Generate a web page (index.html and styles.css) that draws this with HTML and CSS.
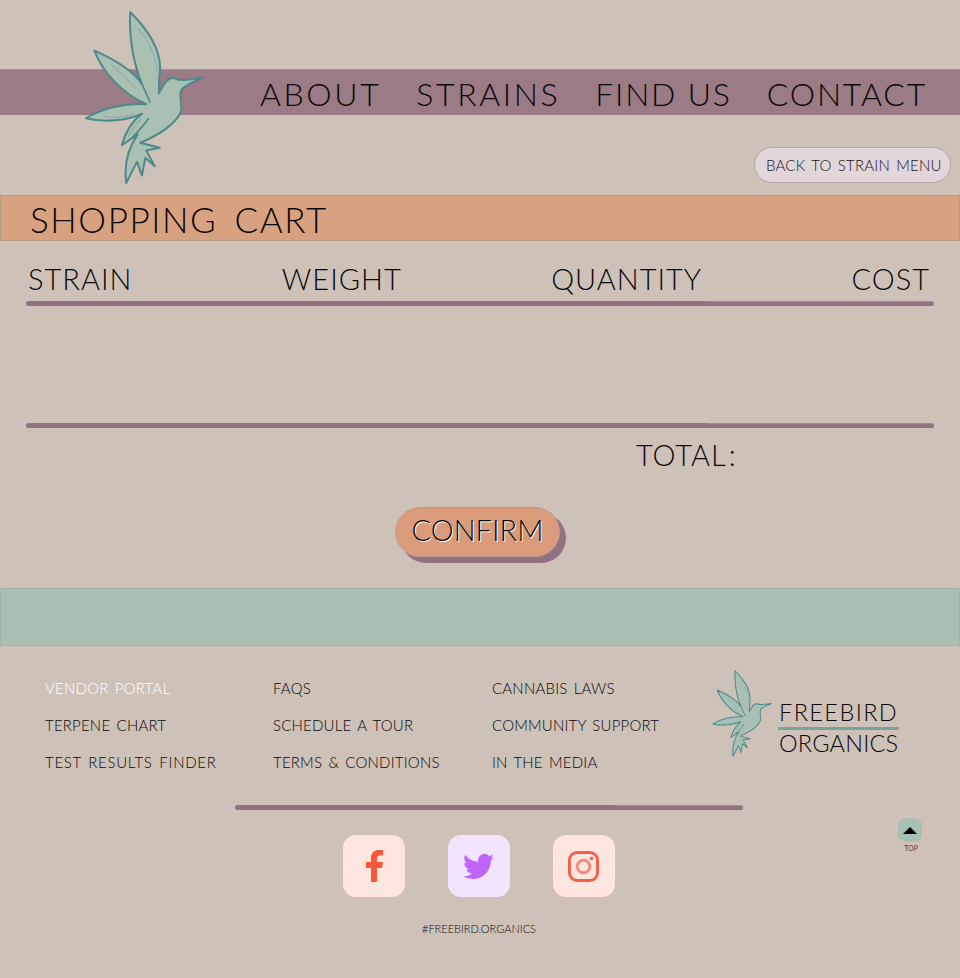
FILE: index.html
```html
<!DOCTYPE html>
<html lang="en">
<head>
<meta charset="utf-8">
<title>Shopping Cart - Freebird Organics</title>
<link rel="stylesheet" href="styles.css">
</head>
<body>
<svg class="defs" width="0" height="0" aria-hidden="true">
  <symbol id="bird" viewBox="72 32 358 516">
    <path class="bird-body" d="M210 35C260 85 310 150 297 225L295 278C310 250 320 230 340 232C355 240 375 240 425 230C400 245 375 250 362 268C355 285 365 310 362 330C350 365 300 400 240 425L298 440L258 448L283 495L255 470L245 523L230 482L198 545C190 490 205 440 232 400L185 432C195 395 215 360 245 338C200 360 130 365 78 352C120 325 190 305 258 310C190 280 130 220 103 150C160 175 215 205 245 250C220 190 205 110 210 35Z"/>
    <path class="bird-line" d="M245 250L270 305M265 352C250 375 235 390 215 410"/>
    <path class="bird-vein" d="M235 85C265 125 290 170 290 215M150 190C180 215 205 240 225 262M130 346C160 352 190 348 220 340M205 405C215 385 230 365 245 352"/>
  </symbol>
</svg>

<header class="site-header">
  <svg class="logo-main" aria-hidden="true"><use href="#bird"/></svg>
  <nav class="nav-band">
    <a class="nav-link">ABOUT</a>
    <a class="nav-link">STRAINS</a>
    <a class="nav-link nav-link-tight">FIND US</a>
    <a class="nav-link nav-link-tight">CONTACT</a>
  </nav>
  <div class="back-row"><a class="back-btn">BACK TO STRAIN MENU</a></div>
</header>

<main>
  <h1 class="title-band">SHOPPING CART</h1>
  <section class="cart">
    <div class="cart-head">
      <span>STRAIN</span><span>WEIGHT</span><span>QUANTITY</span><span>COST</span>
    </div>
    <div class="rule cart-rule"><i class="seg-a"></i><i class="seg-b"></i><i class="seg-c"></i></div>
    <div class="cart-body"></div>
    <div class="rule cart-rule"><i class="seg-a"></i><i class="seg-b"></i><i class="seg-c"></i></div>
    <div class="total">TOTAL :</div>
    <div class="confirm-row"><button class="confirm">CONFIRM</button></div>
  </section>
  <div class="green-band"></div>
</main>

<footer class="site-footer">
  <div class="footer-top">
    <ul class="link-col col-1">
      <li class="link-light">VENDOR PORTAL</li>
      <li>TERPENE CHART</li>
      <li class="link-wide">TEST RESULTS FINDER</li>
    </ul>
    <ul class="link-col col-2">
      <li>FAQS</li>
      <li>SCHEDULE A TOUR</li>
      <li>TERMS &amp; CONDITIONS</li>
    </ul>
    <ul class="link-col col-3">
      <li>CANNABIS LAWS</li>
      <li>COMMUNITY SUPPORT</li>
      <li>IN THE MEDIA</li>
    </ul>
    <div class="brand">
      <svg class="logo-small" aria-hidden="true"><use href="#bird"/></svg>
      <div class="wordmark"><span class="word">FREEBIRD</span><span class="word word-bottom">ORGANICS</span></div>
    </div>
  </div>
  <div class="rule footer-rule"><i class="seg-d"></i><i class="seg-e"></i><i class="seg-f"></i></div>
  <a class="top-link">
    <span class="top-btn"><svg width="14" height="7" viewBox="0 0 14 7"><path d="M7 0L14 7H0Z"/></svg></span>
    <span class="top-label">TOP</span>
  </a>
  <div class="socials">
    <a class="social social-pink"><svg class="fb" viewBox="0 0 17 32"><path d="M5 32V18H0V12H5V8C5 3 8 0 13 0H17V5.5H14C11.5 5.5 11 7 11 8.5V12H17L16 18H11V32Z"/></svg></a>
    <a class="social social-purple"><svg class="tw" viewBox="0 0 24 24"><path d="M23.953 4.57a10 10 0 01-2.825.775 4.958 4.958 0 002.163-2.723c-.951.555-2.005.959-3.127 1.184a4.92 4.92 0 00-8.384 4.482C7.69 8.095 4.067 6.13 1.64 3.162a4.822 4.822 0 00-.666 2.475c0 1.71.87 3.213 2.188 4.096a4.904 4.904 0 01-2.228-.616v.06a4.923 4.923 0 003.946 4.827 4.996 4.996 0 01-2.212.085 4.936 4.936 0 004.604 3.417 9.867 9.867 0 01-6.102 2.105c-.39 0-.779-.023-1.17-.067a13.995 13.995 0 007.557 2.209c9.053 0 13.998-7.496 13.998-13.985 0-.21 0-.42-.015-.63A9.935 9.935 0 0024 4.59z"/></svg></a>
    <a class="social social-pink"><svg class="ig" viewBox="0 0 32 32"><rect class="ig-frame" x="1.5" y="1.5" width="29" height="29" rx="8"/><circle class="ig-lens" cx="16" cy="16" r="6.5"/><circle class="ig-dot" cx="24.3" cy="7.7" r="1.8"/></svg></a>
  </div>
  <div class="hashtag">#FREEBIRD.ORGANICS</div>
</footer>
</body>
</html>
```
FILE: styles.css
```css
* { box-sizing: border-box; }
html, body { margin: 0; padding: 0; }
body {
  position: relative;
  width: 960px;
  height: 978px;
  overflow: hidden;
  background: #cec1b8;
  color: #0a0808;
  font-family: Lato, "Liberation Sans", sans-serif;
  font-weight: 300;
}
.defs { position: absolute; }
.bird-body { fill: #a9c0b2; stroke: #4d8a8a; stroke-width: 6; stroke-linejoin: round; }
.bird-line { fill: none; stroke: #4d8a8a; stroke-width: 5; }
.bird-vein { fill: none; stroke: #8aaca4; stroke-width: 3; }

.site-header { height: 195px; padding-top: 69px; }
.logo-main { position: absolute; left: 84px; top: 11px; width: 120px; height: 173px; }
.nav-band {
  height: 46px;
  background: #9b7b85;
  border-top: 1px solid #a08f8c;
  display: flex;
  justify-content: flex-end;
  align-items: center;
  gap: 35px;
  padding: 2px 33px 0 0;
}
.nav-link { font-size: 32px; letter-spacing: 2.6px; line-height: 44px; }
.nav-link-tight { letter-spacing: 1.8px; }
.back-row { display: flex; justify-content: flex-end; padding: 32px 9px 0 0; }
.back-btn {
  width: 197px;
  height: 36px;
  border: 1px solid #b3a6a6;
  border-radius: 18px;
  background: #e2d6da;
  color: #1c1418;
  font-size: 15px;
  line-height: 35px;
  letter-spacing: .2px;
  word-spacing: 2px;
  padding-left: 11px;
  white-space: nowrap;
}

.title-band {
  margin: 0;
  height: 46px;
  background: #d8a281;
  border: 1px solid #b59a85;
  font-size: 35px;
  font-weight: 300;
  line-height: 46px;
  letter-spacing: 1.6px;
  word-spacing: 6px;
  padding-left: 29px;
}
.cart { height: 347px; padding: 0 26px; }
.cart-head {
  display: flex;
  justify-content: space-between;
  padding: 21px 4px 0 2px;
  height: 60px;
  font-size: 29px;
  line-height: 34px;
  letter-spacing: 1px;
}
.rule { display: flex; height: 5px; }
.rule i { display: block; height: 5px; background: #927182; }
.seg-a, .seg-d { border-radius: 3px 0 0 3px; }
.seg-a { width: 228px; }
.seg-b { width: 452px; }
.seg-c { width: 228px; border-top: 1px solid #a48a96; border-radius: 0 3px 3px 0; }
.cart-body { height: 117px; }
.total {
  margin-top: 9px;
  padding-left: 610px;
  font-size: 29px;
  line-height: 36px;
  letter-spacing: 1px;
  word-spacing: -6px;
}
.confirm-row { padding: 34px 0 0 369px; }
.confirm {
  display: block;
  width: 165px;
  height: 50px;
  padding: 0 0 6px;
  border: 1px solid #b5a095;
  border-radius: 25px;
  background: #d99b79;
  box-shadow: 6px 6px 0 #927182;
  color: #0a0808;
  font-family: inherit;
  font-size: 29px;
  font-weight: 300;
  text-shadow: 1px 1px 0 #fff;
}
.green-band { height: 58px; background: #a9bfb1; border: 1px solid #9db3a6; }

.site-footer { height: 332px; }
.footer-top { display: flex; height: 159px; padding: 24px 0 0 45px; position: relative; }
.link-col {
  list-style: none;
  margin: 0;
  padding: 0;
  font-size: 15px;
  letter-spacing: .2px;
  word-spacing: 2px;
  white-space: nowrap;
}
.link-col li { height: 37px; line-height: 37px; }
.col-1 { width: 228px; }
.col-2 { width: 219px; }
.col-3 { width: 221px; }
.link-light { color: #fff; }
.link-col .link-wide { letter-spacing: .7px; }
.brand { display: flex; align-items: flex-start; gap: 6px; margin-left: -1px; }
.logo-small { width: 60px; height: 87px; flex: none; }
.wordmark { display: flex; flex-direction: column; width: 121px; margin-top: 29px; }
.word {
  display: block;
  height: 31px;
  border-bottom: 3px solid #7ca09c;
  font-size: 23.5px;
  line-height: 26px;
  letter-spacing: 1.4px;
  padding-left: 1px;
}
.word-bottom { border-bottom: 0; height: 30px; line-height: 26px; letter-spacing: .2px; }
.footer-rule { margin-left: 235px; }
.seg-d { width: 130px; }
.seg-e { width: 250px; }
.seg-f { width: 128px; border-top: 1px solid #a48a96; border-radius: 0 3px 3px 0; }
.top-link { position: absolute; left: 898px; top: 818px; width: 24px; display: block; }
.top-btn {
  display: flex;
  align-items: center;
  justify-content: center;
  width: 24px;
  height: 24px;
  border-radius: 8px;
  background: #a9bfb1;
}
.top-btn svg { display: block; }
.top-label { display: block; margin-top: 1px; margin-left: 2px; font-size: 7px; line-height: 10px; text-align: center; color: #4a4444; font-weight: 400; }
.socials { display: flex; justify-content: center; gap: 43px; padding: 25px 2px 0 0; }
.social { width: 62px; height: 62px; border-radius: 13px; display: flex; align-items: center; justify-content: center; }
.social-pink { background: #fde5e0; }
.social-purple { background: #f3e4fd; }
.fb { width: 17px; height: 32px; fill: #f9593a; }
.tw { width: 31px; height: 31px; fill: #bf65fb; margin-right: 2px; }
.ig { width: 31px; height: 31px; fill: none; margin-right: 2px; }
.ig-frame { stroke: #f4604a; stroke-width: 3; }
.ig-lens { stroke: #f68a78; stroke-width: 3; }
.ig-dot { fill: #f4604a; }
.hashtag { margin-top: 25px; padding-right: 2px; text-align: center; font-size: 11px; line-height: 14px; font-weight: 300; }
```
